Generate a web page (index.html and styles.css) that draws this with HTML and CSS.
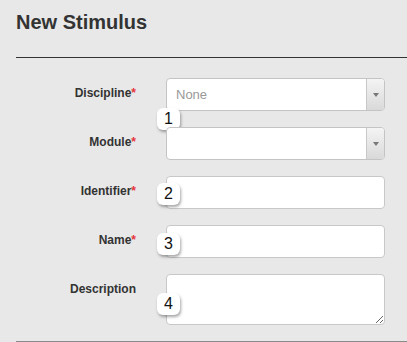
FILE: index.html
```html
<!DOCTYPE html>
<html lang="en">
<head>
    <meta charset="UTF-8">
    <meta name="viewport" content="width=device-width, initial-scale=1.0">
    <title>New Stimulus</title>
    <link rel="stylesheet" href="styles.css">
</head>
<body>
    <div class="page">
        <h2 class="page-title">New Stimulus</h2>
        <form class="stimulus-form">
            <!-- Discipline -->
            <div class="form-row">
                <label class="form-label">Discipline<span class="req">*</span></label>
                <div class="field">
                    <div class="select">
                        <span class="select-value placeholder">None</span>
                        <span class="select-arrow"></span>
                    </div>
                    <span class="badge badge-1">1</span>
                </div>
            </div>
            <!-- Module -->
            <div class="form-row">
                <label class="form-label">Module<span class="req">*</span></label>
                <div class="field">
                    <div class="select">
                        <span class="select-value"></span>
                        <span class="select-arrow"></span>
                    </div>
                </div>
            </div>
            <!-- Identifier -->
            <div class="form-row">
                <label class="form-label">Identifier<span class="req">*</span></label>
                <div class="field">
                    <input type="text" class="text-input">
                    <span class="badge badge-2">2</span>
                </div>
            </div>
            <!-- Name -->
            <div class="form-row">
                <label class="form-label">Name<span class="req">*</span></label>
                <div class="field">
                    <input type="text" class="text-input">
                    <span class="badge badge-3">3</span>
                </div>
            </div>
            <!-- Description -->
            <div class="form-row">
                <label class="form-label">Description</label>
                <div class="field">
                    <textarea class="text-area"></textarea>
                    <span class="badge badge-4">4</span>
                </div>
            </div>
        </form>
    </div>
</body>
</html>
```

FILE: styles.css
```css
body {
    font-family: "Liberation Sans", Arial, sans-serif;
    background-color: #e8e8e8;
    color: #333;
    margin: 0;
}
.page {
    padding: 0 0 0 16px;
}
.page-title {
    font-size: 20px;
    font-weight: bold;
    color: #333;
    margin: 0;
    padding-top: 10px;
    height: 47px;
    line-height: 24px;
    border-bottom: 1px solid #333;
}
.stimulus-form {
    padding-top: 20px;
    height: 263px;
    border-bottom: 1px solid #8a8a8a;
}
.form-row {
    display: flex;
    margin-bottom: 16px;
}
.form-label {
    width: 120px;
    margin-right: 30px;
    text-align: right;
    font-size: 12px;
    font-weight: bold;
    line-height: 18px;
    padding-top: 6px;
    color: #333;
}
.form-label .req {
    color: #e5343a;
}
.field {
    position: relative;
    width: 219px;
}
.select {
    display: flex;
    height: 33px;
    box-sizing: border-box;
    background: #fff;
    border: 1px solid #c4c4c4;
    border-radius: 4px;
}
.select-value {
    flex: 1;
    padding-left: 9px;
    font-size: 13px;
    line-height: 31px;
}
.select-value.placeholder {
    color: #999;
}
.select-arrow {
    width: 17px;
    border-left: 1px solid #c8c8c8;
    border-radius: 0 3px 3px 0;
    background: linear-gradient(#f4f4f4, #d9d9d9);
    display: flex;
    align-items: center;
    justify-content: center;
}
.select-arrow::after {
    content: "";
    border-left: 3px solid transparent;
    border-right: 3px solid transparent;
    border-top: 4px solid #777;
}
.text-input,
.text-area {
    display: block;
    width: 219px;
    height: 33px;
    box-sizing: border-box;
    margin: 0;
    border: 1px solid #c8c8c8;
    border-radius: 4px;
    background: #fff;
    font-family: inherit;
    font-size: 13px;
    outline: none;
}
.text-area {
    height: 51px;
    resize: vertical;
}
.badge {
    position: absolute;
    left: -9px;
    width: 23px;
    height: 22px;
    background: #fff;
    border-radius: 6px;
    box-shadow: 1px 2px 3px rgba(0, 0, 0, 0.35);
    font-size: 16px;
    line-height: 22px;
    text-align: center;
    color: #111;
}
.badge-1 { top: 30px; }
.badge-2 { top: 7px; }
.badge-3 { top: 8px; }
.badge-4 { top: 19px; }
```
